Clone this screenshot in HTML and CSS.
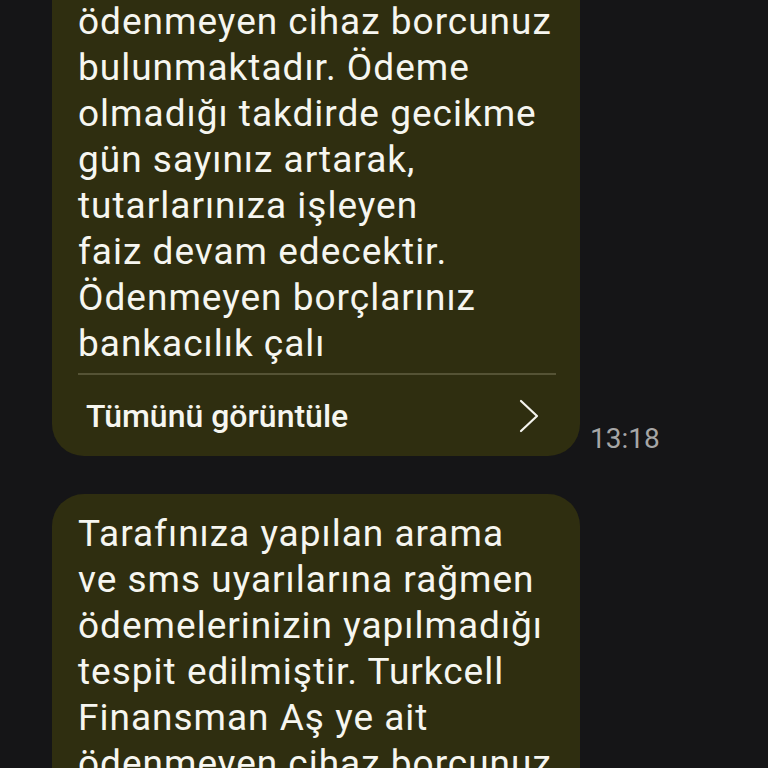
FILE: index.html
```html
<!DOCTYPE html>
<html lang="tr">
<head>
<meta charset="utf-8">
<title>Mesajlar</title>
<link rel="stylesheet" href="styles.css">
</head>
<body>
<main class="thread">
  <div class="row">
    <div class="bubble cut">
      <p class="text">ödenmeyen cihaz borcunuz<br>bulunmaktadır. Ödeme<br>olmadığı takdirde gecikme<br>gün sayınız artarak,<br>tutarlarınıza işleyen<br>faiz devam edecektir.<br>Ödenmeyen borçlarınız<br>bankacılık çalı</p>
      <div class="divider"></div>
      <div class="more">
        <span class="more-label">Tümünü görüntüle</span>
        <svg class="chev" width="22" height="34" viewBox="0 0 22 34"><path d="M3 2 L19 17 L3 32" fill="none" stroke="#f4f4ee" stroke-width="2.2" stroke-linecap="round" stroke-linejoin="round"/></svg>
      </div>
    </div>
    <span class="time">13:18</span>
  </div>
  <div class="row">
    <div class="bubble second">
      <p class="text">Tarafınıza yapılan arama<br>ve sms uyarılarına rağmen<br>ödemelerinizin yapılmadığı<br>tespit edilmiştir. Turkcell<br>Finansman Aş ye ait<br>ödenmeyen cihaz borcunuz</p>
    </div>
  </div>
</main>
</body>
</html>
```
FILE: styles.css
```css
html, body {
  margin: 0;
  padding: 0;
  background: #151517;
  height: 100%;
  overflow: hidden;
}
body {
  font-family: Roboto, "Noto Sans", sans-serif;
  color: #f4f4ee;
}
.thread {
  display: flex;
  flex-direction: column;
  gap: 38px;
  padding-left: 52px;
}
.row {
  display: flex;
  align-items: flex-end;
}
.bubble {
  width: 528px;
  box-sizing: border-box;
  background: #2f2e10;
  border-radius: 32px;
  padding: 0 24px 0 26px;
}
.bubble.cut {
  border-top-left-radius: 0;
  border-top-right-radius: 0;
  padding-top: 0;
}
.bubble.cut .text {
  margin-top: -1px;
}
.bubble.second {
  padding-top: 17px;
  padding-bottom: 20px;
}
.text {
  margin: 0;
  font-size: 37px;
  line-height: 46px;
  letter-spacing: 1px;
  color: #f6f6f0;
  white-space: nowrap;
}
.divider {
  height: 2px;
  background: #555335;
  margin-top: 6px;
}
.more {
  height: 81px;
  display: flex;
  align-items: center;
  justify-content: space-between;
  padding-left: 8px;
  padding-right: 16px;
}
.more-label {
  font-size: 32px;
  font-weight: 500;
  color: #f6f6f0;
}
.chev {
  display: block;
}
.time {
  margin-left: 10px;
  margin-bottom: 3px;
  font-size: 28px;
  line-height: 28px;
  color: #a6a6a6;
}
```
